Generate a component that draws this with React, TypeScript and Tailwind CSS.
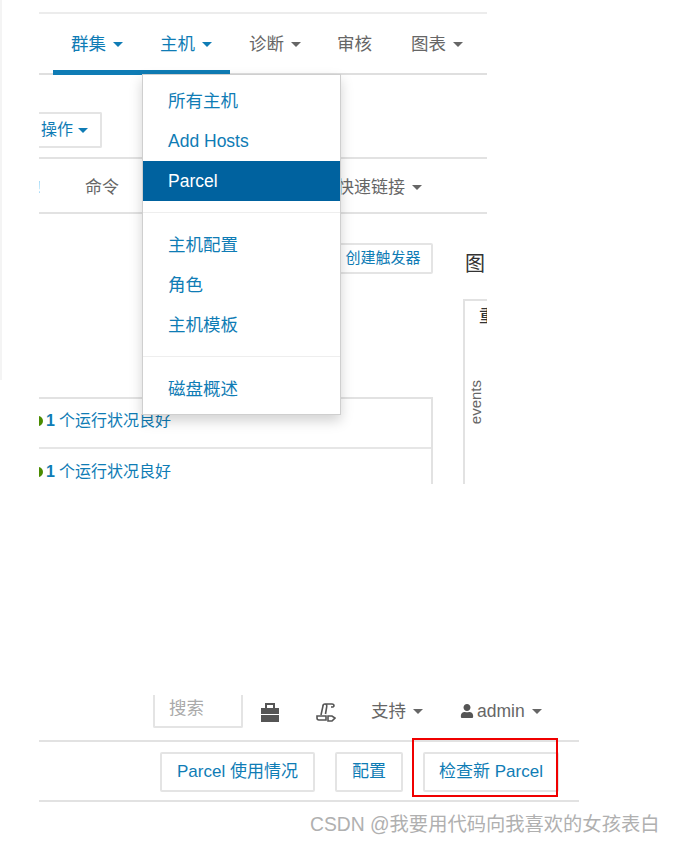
import { FaUser } from "react-icons/fa"

const font = { fontFamily: '"Liberation Sans", "Noto Sans CJK SC", sans-serif' }

const Caret = ({ className = "ml-[7px] border-t-[#666]" }: { className?: string }) => (
  <span className={`inline-block h-0 w-0 border-x-[5px] border-t-[5px] border-x-transparent ${className}`} />
)

const NavItem = ({ label, active, caret, width }: { label: string; active?: boolean; caret?: boolean; width: string }) => (
  <div className={`flex items-center text-[17.5px] ${width} ${active ? "text-[#0f7cb5]" : "text-[#666]"}`}>
    {label}
    {caret && <Caret className={active ? "ml-[7px] border-t-[#0f7cb5]" : "ml-[7px] border-t-[#666]"} />}
  </div>
)

const MenuLink = ({ label, selected }: { label: string; selected?: boolean }) => (
  <div className={`flex h-10 items-center pl-[25px] text-[17.5px] ${selected ? "bg-[#00629f] text-white" : "text-[#0f7cb5]"}`}>
    {label}
  </div>
)

const MenuDivider = () => (
  <div className="flex h-6 items-center pb-[2px]">
    <div className="h-px w-full bg-[#eeeeee]" />
  </div>
)

const HealthRow = ({ border }: { border?: boolean }) => (
  <div className={`flex h-[50px] items-center text-[16px] text-[#0f7cb5] ${border ? "border-b-2 border-[#e6e6e6] pb-[4px]" : "pb-[5px]"}`}>
    <span className="-ml-[6px] mr-[3px] h-[10px] w-[10px] rounded-full bg-[#4b8b00]" />
    <span className="mr-[4px] font-bold">1</span>
    个运行状况良好
  </div>
)

const ActionButton = ({ label, width, className = "" }: { label: string; width: string; className?: string }) => (
  <div className={`flex h-10 items-center justify-center rounded-[2px] border-2 border-[#e4e4e4] text-[17px] text-[#0f7cb5] ${width} ${className}`}>
    {label}
  </div>
)

export default function App() {
  return (
    <div className="relative h-[844px] w-[674px] overflow-hidden bg-white" style={font}>
      <div className="absolute left-0 top-0 h-[380px] w-[2px] bg-[#f4f4f4]" />

      {/* upper capture */}
      <div className="relative ml-[39px] h-[484px] w-[448px] overflow-hidden">
        <div className="mt-3 border-t-2 border-[#ececec]" />
        <div className="relative flex h-[61px] items-center border-b-2 border-[#dfdfdf] pl-[32px] pt-[1px]">
          <NavItem label="群集" caret active width="w-[89px]" />
          <NavItem label="主机" caret active width="w-[89px]" />
          <NavItem label="诊断" caret width="w-[88px]" />
          <NavItem label="审核" width="w-[74px]" />
          <NavItem label="图表" caret width="w-[70px]" />
          <div className="absolute bottom-[-2px] left-[14px] h-[5px] w-[177px] bg-[#0f7cb5]" />
        </div>

        <div className="flex h-[84px] items-start border-b-2 border-[#e2e2e2] pt-[37px]">
          <div className="flex h-[36px] w-[63px] items-center justify-end rounded-r-[2px] border-2 border-l-0 border-[#e4e4e4] pr-[12px] text-[16px] text-[#0f7cb5]">
            操作
            <Caret className="ml-[5px] border-t-[#0f7cb5]" />
          </div>
        </div>

        <div className="flex h-[55px] items-center border-b-2 border-[#e2e2e2] pt-[4px] text-[17px] text-[#666]">
          <span className="-ml-[3px] w-[49px]">!</span>
          <span className="w-[252px]">命令</span>
          <span className="flex items-center">
            快速链接
            <Caret />
          </span>
        </div>

        <div className="flex">
          <div className="w-[394px] shrink-0">
            <div className="flex h-[183px] items-start justify-end pt-[29px]">
              <div className="flex h-[31px] w-[100px] items-center justify-center rounded-[2px] border-2 border-[#e4e4e4] text-[15px] text-[#0f7cb5]">
                创建触发器
              </div>
            </div>
            <div className="border-r-2 border-t-2 border-[#e2e2e2]">
              <HealthRow border />
              <HealthRow />
            </div>
          </div>
          <div className="ml-[30px] w-[24px] shrink-0">
            <div className="h-[85px] pl-[2px] pt-[35px] text-[20px] text-[#333]">图</div>
            <div className="h-[200px] overflow-hidden border-l-2 border-t-2 border-[#e2e2e2] pl-[14px]">
              <div className="mt-[4px] w-[18px] text-[17px] font-medium leading-[24px] text-[#333]">重</div>
              <div className="-ml-[11px] mt-[51px] rotate-180 text-[15px] leading-none text-[#666] [writing-mode:vertical-rl]">
                events
              </div>
            </div>
          </div>
        </div>
      </div>

      {/* lower capture */}
      <div className="ml-[39px] mt-[211px] w-[540px]">
        <div className="flex h-[47px] items-start border-b-2 border-[#e2e2e2] text-[#666]">
          <div className="ml-[114px] flex h-[33px] w-[90px] items-center rounded-b-[2px] border-2 border-t-0 border-[#e4e4e4] pb-[4px] pl-[14px] text-[17.5px] text-[#aaa]">
            搜索
          </div>
          <svg className="ml-[18px] mt-[8px]" width="18" height="19" viewBox="0 0 18 19" fill="#555">
            <path d="M4 0h10v5h-2V2H6v3H4z" />
            <rect x="0" y="5" width="18" height="6" />
            <rect x="0" y="12" width="18" height="7" />
          </svg>
          <svg className="ml-[37px] mt-[8px]" width="20" height="20" viewBox="0 0 20 20" fill="none" stroke="#555" strokeWidth="1.6">
            <path d="M5 12 7 3a2 2 0 0 1 2-2h7a2 2 0 0 1 2 2l-1 1h-2M9 1c2 0 2 2 1.500 4l-1 6" />
            <path d="M1 13h9v4H3a2 2 0 0 1-2-2zM12 13h4l3 2-3 3h-4z" />
          </svg>
          <div className="ml-[35px] mt-[3px] flex items-center text-[17.5px]">
            支持
            <Caret />
          </div>
          <div className="ml-[37px] mt-[3px] flex items-center text-[17.5px]">
            <FaUser className="mr-[3px] text-[14px] text-[#555]" />
            admin
            <Caret />
          </div>
        </div>
        <div className="flex h-[60px] items-center justify-end gap-5 border-b-2 border-[#e2e2e2] pr-5 pt-[2px]">
          <ActionButton label="Parcel 使用情况" width="w-[155px]" />
          <ActionButton label="配置" width="w-[68px]" />
          <ActionButton label="检查新 Parcel" width="w-[136px]" />
        </div>
      </div>

      {/* dropdown */}
      <div className="absolute left-[142px] top-[74px] h-[341px] w-[199px] border border-[#cfcfcf] bg-white pt-[6px] shadow-[0_6px_12px_rgba(0,0,0,0.175)]">
        <MenuLink label="所有主机" />
        <MenuLink label="Add Hosts" />
        <MenuLink label="Parcel" selected />
        <MenuDivider />
        <MenuLink label="主机配置" />
        <MenuLink label="角色" />
        <MenuLink label="主机模板" />
        <MenuDivider />
        <MenuLink label="磁盘概述" />
      </div>

      {/* annotation */}
      <div className="absolute left-[412px] top-[738px] h-[59px] w-[146px] border-2 border-[#f00000]" />
      <div className="absolute left-[310px] top-[812px] text-[19.3px] leading-[26px] text-[#b0b0b0]">
        CSDN @我要用代码向我喜欢的女孩表白
      </div>
    </div>
  )
}
